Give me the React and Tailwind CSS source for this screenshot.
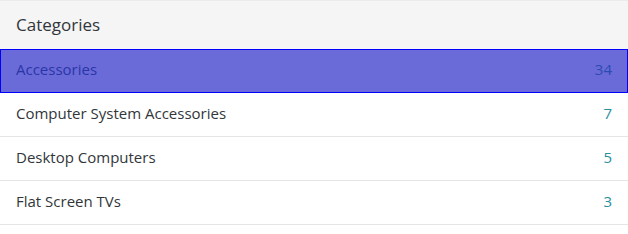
export default function App() {
  const items = [
    { name: "Accessories", count: 34, selected: true },
    { name: "Computer System Accessories", count: 7 },
    { name: "Desktop Computers", count: 5 },
    { name: "Flat Screen TVs", count: 3 },
  ];
  return (
    <div className="w-[628px] h-[234px] bg-white" style={{ fontFamily: '"Open Sans", sans-serif' }}>
      <div className="h-[49px] bg-[#f5f5f5] border-t border-[#ebebeb] flex items-center px-4 pb-[1px]">
        <span className="text-[17px] text-[#32363a]">Categories</span>
      </div>
      <ul>
        {items.map((it) =>
          it.selected ? (
            <li key={it.name} className="h-[44px] bg-[#6a6bd9] border border-[#0000ff] flex items-center justify-between pl-[15px] pr-[15px] pb-[3px]">
              <span className="text-[15px] text-[#2a36a6]">{it.name}</span>
              <span className="text-[15px] text-[#2a4cb0]">{it.count}</span>
            </li>
          ) : (
            <li key={it.name} className="h-[44px] border-b border-[#e5e5e5] flex items-center justify-between px-4 pb-[2px]">
              <span className="text-[15px] text-[#32363a]">{it.name}</span>
              <span className="text-[15px] text-[#2b8fa0]">{it.count}</span>
            </li>
          )
        )}
      </ul>
    </div>
  );
}
